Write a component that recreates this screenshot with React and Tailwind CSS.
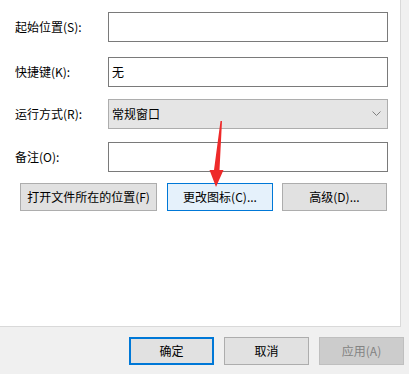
const font = { fontFamily: '"Noto Sans CJK SC", "Noto Sans", sans-serif' };

const Label = ({ children }) => (
  <div className="w-[93px] shrink-0 text-[12px] text-[#000]">{children}</div>
);

const Btn = ({ children, className }) => (
  <div className={`flex items-center justify-center text-[12px] border ${className}`}>{children}</div>
);

const App = () => {
  return (
    <div className="w-[409px] h-[374px] bg-[#f0f0f0] flex flex-col" style={font}>
      <div className="flex h-[327px]">
        <div className="w-[401px] h-full bg-white border-r border-b border-[#d9d9d9] pl-[15px] pt-[12px]">
          <div className="flex items-center h-[30px]">
            <Label>起始位置(S):</Label>
            <div className="w-[280px] h-[30px] border border-[#7a7a7a]" />
          </div>
          <div className="flex items-center h-[30px] mt-[15px]">
            <Label>快捷键(K):</Label>
            <div className="w-[280px] h-[30px] border border-[#7a7a7a] flex items-center pl-[3px] text-[12px]">无</div>
          </div>
          <div className="flex items-center h-[30px] mt-[12px]">
            <Label>运行方式(R):</Label>
            <div className="w-[280px] h-[30px] border border-[#adadad] bg-[#e5e5e5] flex items-center justify-between pl-[3px] pr-[6px] text-[12px]">
              <span>常规窗口</span>
              <svg width="9" height="6" viewBox="0 0 9 6" fill="none">
                <path d="M0.5 0.5L4.5 4.5L8.5 0.5" stroke="#808080" strokeWidth="1" />
              </svg>
            </div>
          </div>
          <div className="flex items-center h-[30px] mt-[13px]">
            <Label>备注(O):</Label>
            <div className="w-[280px] h-[30px] border border-[#7a7a7a]" />
          </div>
          <div className="relative flex mt-[11px] pl-[5px]">
            <Btn className="w-[137px] h-[28px] bg-[#e1e1e1] border-[#adadad]">打开文件所在的位置(F)</Btn>
            <Btn className="w-[106px] h-[28px] ml-[10px] bg-[#e5f1fb] border-[#0078d7]">更改图标(C)...</Btn>
            <Btn className="w-[105px] h-[28px] ml-[9px] bg-[#e1e1e1] border-[#adadad]">高级(D)...</Btn>
            <svg className="absolute left-[190px] top-[-62px]" width="24" height="68" viewBox="0 0 24 68">
              <path d="M15.5 0 L17 0 L14.5 49 L18.5 49 L11 66 L4.5 49 L9 49 Z" fill="#ee2a2a" />
            </svg>
          </div>
        </div>
        <div className="flex-1" />
      </div>
      <div className="flex justify-end gap-[10px] pr-[5px] mt-[10px]">
        <Btn className="w-[85px] h-[28px] bg-[#e1e1e1] border-2 border-[#0078d7]">确定</Btn>
        <Btn className="w-[85px] h-[28px] bg-[#e1e1e1] border-[#adadad]">取消</Btn>
        <Btn className="w-[85px] h-[28px] bg-[#cccccc] border-[#bfbfbf] text-[#838383]">应用(A)</Btn>
      </div>
    </div>
  );
};

export default App;
